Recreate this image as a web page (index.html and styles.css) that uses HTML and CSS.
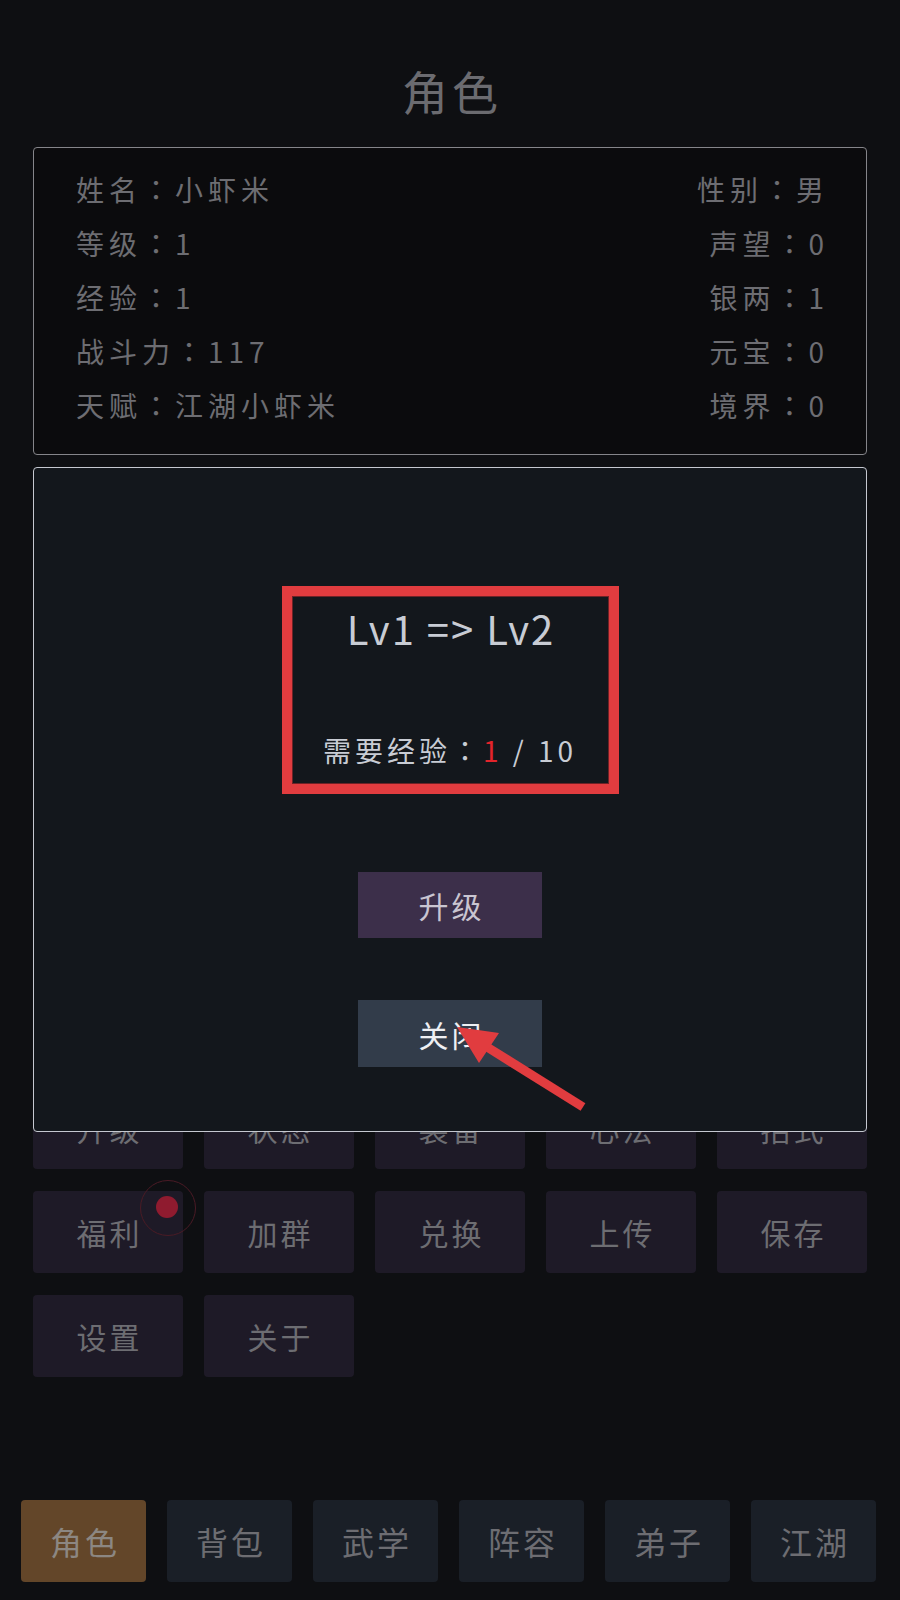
FILE: index.html
```html
<!DOCTYPE html>
<html lang="zh-CN">
<head>
  <meta charset="UTF-8">
  <meta name="viewport" content="width=device-width, initial-scale=1.0">
  <title>角色</title>
  <link rel="stylesheet" href="styles.css">
</head>
<body>
  <div class="page">
    <h1 class="title">角色</h1>

    <div class="info-box">
      <div class="info-row"><span>姓名<i class="colon" lang="zh-TW">：</i>小虾米</span><span>性别<i class="colon" lang="zh-TW">：</i>男</span></div>
      <div class="info-row"><span>等级<i class="colon" lang="zh-TW">：</i>1</span><span>声望<i class="colon" lang="zh-TW">：</i>0</span></div>
      <div class="info-row"><span>经验<i class="colon" lang="zh-TW">：</i>1</span><span>银两<i class="colon" lang="zh-TW">：</i>1</span></div>
      <div class="info-row"><span>战斗力<i class="colon" lang="zh-TW">：</i>117</span><span>元宝<i class="colon" lang="zh-TW">：</i>0</span></div>
      <div class="info-row"><span>天赋<i class="colon" lang="zh-TW">：</i>江湖小虾米</span><span>境界<i class="colon" lang="zh-TW">：</i>0</span></div>
    </div>

    <div class="menu-grid">
      <div class="menu-btn">升级</div>
      <div class="menu-btn">状态</div>
      <div class="menu-btn">装备</div>
      <div class="menu-btn">心法</div>
      <div class="menu-btn">招式</div>
      <div class="menu-btn">福利<span class="red-dot"></span></div>
      <div class="menu-btn">加群</div>
      <div class="menu-btn">兑换</div>
      <div class="menu-btn">上传</div>
      <div class="menu-btn">保存</div>
      <div class="menu-btn">设置</div>
      <div class="menu-btn">关于</div>
    </div>

    <nav class="tabbar">
      <div class="tab active">角色</div>
      <div class="tab">背包</div>
      <div class="tab">武学</div>
      <div class="tab">阵容</div>
      <div class="tab">弟子</div>
      <div class="tab">江湖</div>
    </nav>

    <div class="dialog">
      <div class="level-box">
        <div class="level-line">Lv1 =&gt; Lv2</div>
        <div class="exp-line">需要经验<i class="colon" lang="zh-TW">：</i><span class="exp-now">1</span> / 10</div>
      </div>
      <button class="dlg-btn upgrade">升级</button>
      <button class="dlg-btn close">关闭</button>
    </div>

    <svg class="arrow" width="160" height="110" viewBox="0 0 160 110">
      <line x1="143" y1="92" x2="47" y2="32" stroke="#e13c3f" stroke-width="9"/>
      <polygon points="17,12 59,18 39,48" fill="#e13c3f"/>
    </svg>
  </div>
</body>
</html>
```

FILE: styles.css
```css
* {
  margin: 0;
  padding: 0;
  box-sizing: border-box;
}

body {
  background-color: #0e0f12;
  font-family: "Noto Sans CJK SC", "Noto Sans", sans-serif;
  color: #6d6d72;
}

.page {
  position: relative;
  width: 900px;
  height: 1600px;
  padding: 0 33px;
}

.title {
  padding-top: 67px;
  height: 147px;
  font-size: 46px;
  line-height: 46px;
  font-weight: normal;
  letter-spacing: 4px;
  text-indent: 4px;
  text-align: center;
  color: #6b6b70;
}

.colon {
  font-style: normal;
  font-family: "Noto Sans CJK TC", "Noto Sans CJK SC", sans-serif;
}

.info-box {
  border: 1px solid #85858a;
  border-radius: 4px;
  background-color: #0b0b0d;
  padding: 14px 42px 22px;
  height: 308px;
}

.info-row {
  display: flex;
  justify-content: space-between;
  font-size: 28px;
  line-height: 54px;
  letter-spacing: 5px;
}

.info-row span:last-child {
  margin-right: -5px;
}

.menu-grid {
  margin-top: 632px;
  display: grid;
  grid-template-columns: repeat(5, 1fr);
  column-gap: 21px;
  row-gap: 22px;
}

.menu-btn {
  position: relative;
  height: 82px;
  border-radius: 4px;
  background-color: #1e1a27;
  display: flex;
  align-items: center;
  justify-content: center;
  font-size: 30px;
  letter-spacing: 3px;
  text-indent: 3px;
  color: #6d6d72;
}

.red-dot {
  position: absolute;
  top: 5px;
  right: 5px;
  width: 22px;
  height: 22px;
  border-radius: 50%;
  background-color: #8f1b2f;
}

.red-dot::after {
  content: "";
  position: absolute;
  top: -16px;
  left: -16px;
  width: 54px;
  height: 54px;
  border-radius: 50%;
  border: 1px solid #4a1a25;
}

.tabbar {
  margin: 123px -9px 0 -12px;
  display: flex;
  gap: 21px;
}

.tab {
  flex: 1;
  height: 82px;
  border-radius: 4px;
  background-color: #1a1f27;
  display: flex;
  align-items: center;
  justify-content: center;
  font-size: 32px;
  letter-spacing: 3px;
  text-indent: 3px;
  color: #6d6d72;
}

.tab.active {
  background-color: #634629;
  color: #8c8782;
}

.dialog {
  position: absolute;
  top: 467px;
  left: 33px;
  width: 834px;
  height: 665px;
  border: 1px solid #c5c8d0;
  border-radius: 4px;
  background-color: #13171c;
  display: flex;
  flex-direction: column;
  align-items: center;
  padding-top: 118px;
}

.level-box {
  width: 337px;
  border: 10px solid #e13c3f;
  box-shadow: inset 0 0 0 1px #6e2226;
  padding: 12px 0 20px;
  text-align: center;
  color: #c8ccd4;
}

.level-line {
  font-size: 40px;
  line-height: 40px;
  letter-spacing: 2px;
  text-indent: 2px;
}

.exp-line {
  margin-top: 88px;
  font-size: 28px;
  line-height: 28px;
  letter-spacing: 4px;
}

.exp-now {
  color: #e3242b;
}

.dlg-btn {
  width: 184px;
  height: 66px;
  border: none;
  font-family: inherit;
  font-size: 30px;
  letter-spacing: 3px;
  text-indent: 3px;
}

.dlg-btn.upgrade {
  margin-top: 78px;
  background-color: #3c2f4a;
  color: #c9c5d1;
}

.dlg-btn.close {
  margin-top: 62px;
  height: 67px;
  background-color: #323c4a;
  color: #eef0f4;
}

.arrow {
  position: absolute;
  left: 440px;
  top: 1015px;
}
```
